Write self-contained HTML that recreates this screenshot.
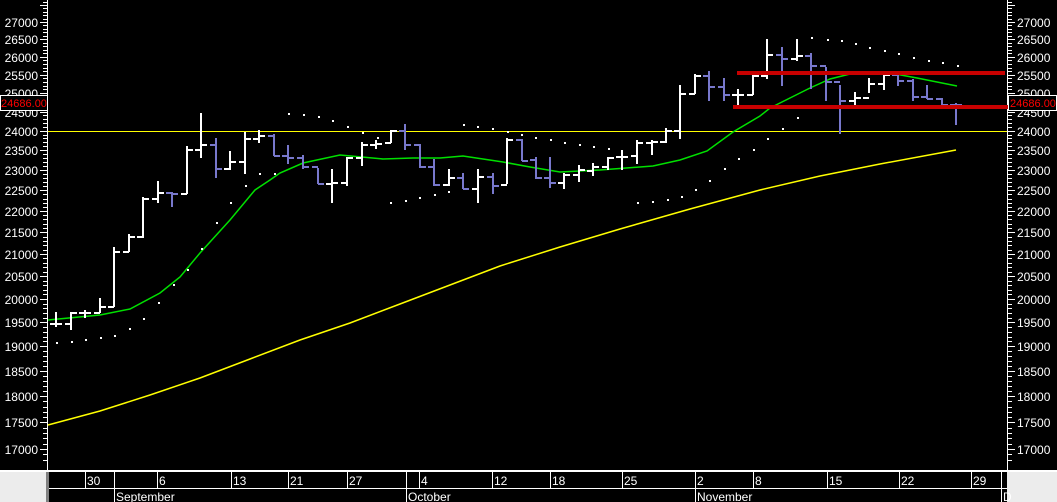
<!DOCTYPE html>
<html><head><meta charset="utf-8"><style>
html,body{margin:0;padding:0;background:#000;width:1057px;height:502px;overflow:hidden}
svg{display:block;font-family:"Liberation Sans",sans-serif}
</style></head><body>
<svg id="s" width="1057" height="502" xmlns="http://www.w3.org/2000/svg" shape-rendering="crispEdges">
<rect width="1057" height="502" fill="#000"/>
</svg>
<script>
var s=document.getElementById('s'),h='';
function L(x1,y1,x2,y2,c,w){h+='<line x1="'+x1+'" y1="'+y1+'" x2="'+x2+'" y2="'+y2+'" stroke="'+c+'" stroke-width="'+(w||1)+'"/>';}
function T(x,y,t,c,a,fs){h+='<text x="'+x+'" y="'+y+'" fill="'+c+'" font-size="'+(fs||12)+'" text-anchor="'+(a||'start')+'">'+t+'</text>';}
var K=427/Math.log(27000/17000);
function Y(p){return 22+K*Math.log(27000/p);}
// axes
L(47.5,0,47.5,471,'#fff',1);L(1007.5,0,1007.5,471,'#fff',1);
for(var p=16800;p<=27800;p+=100){var y=Math.round(Y(p))+0.5;if(y<0||y>468)continue;var maj=p%500==0;
L(maj?40:43,y,47,y,'#fff');L(1008,y,maj?1015:1012,y,'#fff');
if(maj&&y>8){T(38,y+4.5,p,'#fff','end');T(1017,y+4.5,p,'#fff');}}
// horizontal line
L(48,131.5,1007,131.5,'#ffff00',1);
// yellow MA
h+='<polyline fill="none" stroke="#ffff00" stroke-width="1.5" shape-rendering="auto" points="48,425 100,411 150,395 200,378 250,359 300,340 350,323 400,304 450,285 500,266 560,247 620,229 690,209 760,190 820,176 880,164 956,150"/>';
// green MA
h+='<polyline fill="none" stroke="#00e000" stroke-width="1.5" shape-rendering="auto" points="48,320 100,315 130,309 160,293 180,277 200,253 230,220 255,190 270,180 280,173 303,163 340,155 383,159 413,158 440,158 463,156 503,162 530,167 560,172 600,170 653,166 680,160 707,151 733,132 760,116 770,108 810,88 830,79 850,74 890,73 917,78 957,86"/>';
// SAR dots
var d=[[56,342],[71,341],[85,339],[100,337],[114,335],[129,328],[143,318],[158,302],[173,284],[187,269],[201,248],[216,222],[230,202],[245,185],[259,173],[274,173],[288,113],[303,114],[318,116],[332,120],[347,126],[362,132],[377,137],[390,202],[405,200],[419,197],[434,194],[448,191],[463,124],[477,126],[492,128],[507,131],[521,134],[535,137],[550,139],[564,142],[579,144],[593,146],[608,148],[637,202],[652,201],[667,199],[681,196],[695,189],[709,180],[724,168],[738,158],[753,149],[767,138],[782,128],[797,117],[811,37],[827,39],[841,40],[855,43],[869,47],[884,50],[898,53],[913,57],[928,60],[942,62],[957,65]];
d.forEach(function(q){h+='<rect x="'+q[0]+'" y="'+q[1]+'" width="2" height="2" fill="#fff"/>';});
// bars x,hi,lo,o,c,blue
var b=[[56,312,326,323,323],[71,312,329,323,312],[85,310,317,312,312],[100,298,312,312,306],[114,247,306,306,251],[129,234,251,251,236],[143,197,237,236,198],[158,181,202,198,192],[172,192,206,192,193,1],[187,146,193,193,149],[201,113,157,149,144],[216,138,177,144,168,1],[230,151,169,168,161],[245,132,173,161,138],[259,130,142,138,135],[274,134,155,135,155,1],[288,145,163,155,157,1],[303,155,168,157,166,1],[318,168,183,166,183,1],[332,169,202,183,182],[347,157,185,182,157],[362,142,165,157,144],[376,140,148,144,143],[391,130,142,142,130],[405,124,149,130,144,1],[420,144,167,144,166,1],[434,159,185,166,184,1],[449,169,185,184,177],[463,173,188,177,188,1],[478,169,202,188,176],[493,173,193,176,185,1],[507,138,183,184,139],[522,139,160,139,160,1],[536,157,178,159,177,1],[550,157,187,177,182,1],[564,173,188,182,174],[579,165,181,174,169],[593,163,175,170,166],[608,157,169,166,157],[622,150,169,156,156],[637,140,163,155,142],[652,140,154,142,141],[666,128,142,141,130],[680,85,138,130,93],[695,74,93,93,75],[709,71,100,75,86,1],[724,78,100,86,94,1],[738,89,105,94,94],[753,73,94,94,75],[767,39,78,75,54],[782,47,85,54,58,1],[797,39,60,58,55],[811,53,88,55,65,1],[826,67,100,65,81,1],[840,85,133,81,100,1],[855,92,104,100,97],[869,78,92,97,83],[884,72,89,83,74],[898,72,85,74,80,1],[913,79,100,80,96,1],[927,85,98,96,98,1],[942,98,104,98,104,1],[956,103,124,104,104,1]];
b.forEach(function(q){var c=q[5]?'#7878cc':'#fff';var x=q[0];L(x,q[1],x,q[2]+1,c,2);L(x-6,q[3]+1,x,q[3]+1,c,2);L(x,q[4]+1,x+6,q[4]+1,c,2);});
// red lines
h+='<rect x="737" y="71" width="268" height="4" fill="#c80000"/>';
h+='<rect x="733" y="105" width="275" height="4" fill="#c80000"/>';
// price labels
h+='<rect x="0.5" y="95.5" width="47" height="15" fill="#000" stroke="#fff"/>';T(24,107,'24686.00','#ff0000','middle',11);
h+='<rect x="1008.5" y="95.5" width="48" height="15" fill="#000" stroke="#fff"/>';T(1033,107,'24686.00','#ff0000','middle',11);
// bottom axis
h+='<rect x="0" y="470" width="1057" height="2" fill="#fff"/>';
h+='<rect x="0" y="472" width="48" height="30" fill="#ececec"/>';
h+='<rect x="46" y="472" width="3" height="30" fill="#808080"/>';
h+='<rect x="1007" y="472" width="50" height="30" fill="#ececec"/>';
L(49,488.5,1007,488.5,'#fff');
[[85,'30'],[157,'6'],[231,'13'],[288,'21'],[347,'27'],[419,'4'],[492,'12'],[550,'18'],[622,'25'],[695,'2'],[753,'8'],[827,'15'],[899,'22'],[971,'29']].forEach(function(q){L(q[0]+.5,472,q[0]+.5,488,'#fff');T(q[0]+2,485,q[1],'#fff');});
[[114,'September'],[406,'October'],[695,'November'],[1001,'D']].forEach(function(q){L(q[0]+.5,472,q[0]+.5,502,'#fff');T(q[0]+2,501,q[1],'#fff');});
s.innerHTML+=h;
</script>
</body></html>
